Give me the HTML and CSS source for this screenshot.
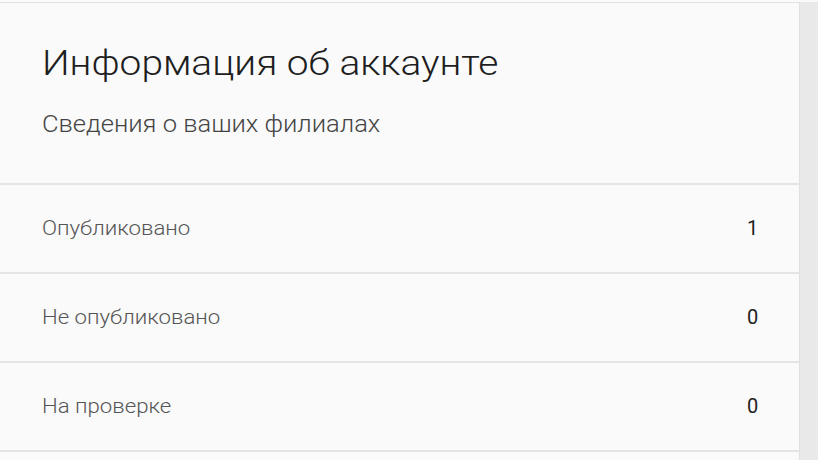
FILE: index.html
```html
<!DOCTYPE html>
<html lang="ru">
<head>
  <meta charset="UTF-8" />
  <title>Информация об аккаунте</title>
  <link rel="stylesheet" href="styles.css">
</head>
<body>
  <div class="page">
    <div class="account-card">
      <div class="card-head">
        <h1><span class="wide">Информация об аккаунте</span></h1>
        <p class="sub"><span class="wide">Сведения о ваших филиалах</span></p>
      </div>
      <div class="stat-row"><span class="label wide">Опубликовано</span><span class="count">1</span></div>
      <div class="stat-row"><span class="label wide">Не опубликовано</span><span class="count">0</span></div>
      <div class="stat-row"><span class="label wide">На проверке</span><span class="count">0</span></div>
    </div>
    <div class="side-strip"></div>
  </div>
</body>
</html>
```

FILE: styles.css
```css
body {
  margin: 0;
  font-family: Roboto, 'Noto Sans', sans-serif;
  background: #fafafa;
  overflow: hidden;
}

.page {
  display: flex;
  height: 460px;
  padding-top: 2px;
  box-sizing: border-box;
}

.account-card {
  flex: 0 0 799px;
  background: #fafafa;
  border-top: 1px solid #e2e2e2;
  border-right: 1px solid #e0e0e0;
}

.side-strip {
  flex: 1;
  background: #e9e9e9;
}

/* text in the shot is a little wider than plain Roboto */
.wide {
  display: inline-block;
  transform: scaleX(1.11);
  transform-origin: left center;
}

.card-head {
  padding: 40px 42px 0;
  height: 140px;
  border-bottom: 2px solid #e4e4e4;
}

.card-head h1 {
  margin: 0;
  font-size: 35px;
  font-weight: 300;
  color: #1e1e1e;
  line-height: 42px;
}

.card-head .sub {
  margin: 26px 0 0;
  font-size: 23px;
  font-weight: 300;
  color: #444;
}

.stat-row {
  display: flex;
  justify-content: space-between;
  align-items: center;
  height: 87px;
  padding: 0 40px 0 42px;
  border-bottom: 2px solid #e4e4e4;
}

.stat-row .label {
  font-size: 20px;
  font-weight: 300;
  color: #555;
  margin-top: -2px;
}

.stat-row .count {
  font-size: 20px;
  color: #222;
  width: 12px;
  margin-top: -2px;
}
```
